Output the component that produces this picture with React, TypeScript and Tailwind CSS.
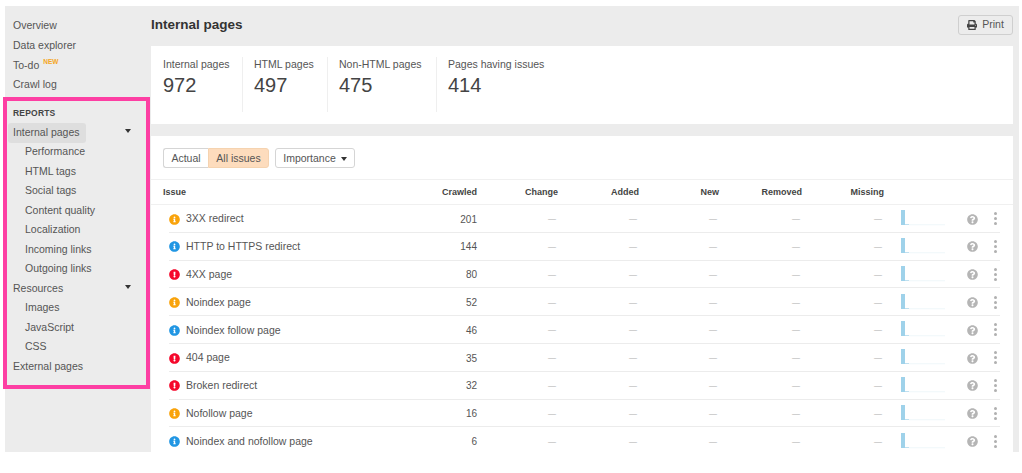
import React from 'react';
import { FaInfoCircle, FaExclamationCircle, FaQuestionCircle, FaPrint } from 'react-icons/fa';

type Level = 'warning' | 'notice' | 'error';

interface IssueRow {
  name: string;
  crawled: number;
  level: Level;
}

const issues: IssueRow[] = [
  { name: '3XX redirect', crawled: 201, level: 'warning' },
  { name: 'HTTP to HTTPS redirect', crawled: 144, level: 'notice' },
  { name: '4XX page', crawled: 80, level: 'error' },
  { name: 'Noindex page', crawled: 52, level: 'warning' },
  { name: 'Noindex follow page', crawled: 46, level: 'notice' },
  { name: '404 page', crawled: 35, level: 'error' },
  { name: 'Broken redirect', crawled: 32, level: 'error' },
  { name: 'Nofollow page', crawled: 16, level: 'warning' },
  { name: 'Noindex and nofollow page', crawled: 6, level: 'notice' },
];

const stats = [
  { label: 'Internal pages', value: 972, width: 'w-[80px]' },
  { label: 'HTML pages', value: 497, width: 'w-[85px]' },
  { label: 'Non-HTML pages', value: 475, width: 'w-[109px]' },
  { label: 'Pages having issues', value: 414, width: 'w-[120px]' },
];

const Arrow = () => (
  <svg viewBox="0 0 6 4" className="w-[6px] h-[4px] fill-[#333]">
    <path d="M0 0h6L3 4z" />
  </svg>
);

const NavItem = ({ label, sub }: { label: string; sub?: boolean }) => (
  <div className={`h-[19.5px] flex items-center ${sub ? 'pl-[20px]' : 'pl-[8px]'}`}>{label}</div>
);

const NavGroup = ({ label, active }: { label: string; active?: boolean }) => (
  <div className="h-[19.5px] flex items-center justify-between pr-[15px]">
    <span className={`h-[20px] flex items-center pl-[5px] pr-[6px] ml-[3px] rounded-[3px] ${active ? 'bg-[#dedede]' : ''}`}>
      {label}
    </span>
    <span className="-mt-[3px] -translate-x-[5px]">
      <Arrow />
    </span>
  </div>
);

const Sidebar = () => (
  <aside className="w-[146px] shrink-0 pt-[10.5px] text-[10.5px] text-[#555]">
    <NavItem label="Overview" />
    <NavItem label="Data explorer" />
    <div className="h-[19.5px] flex items-start pl-[8px] pt-[2px]">
      <span>To-do</span>
      <span className="ml-[4px] -mt-[1px] text-[6.5px] font-bold text-[#f5a623]">NEW</span>
    </div>
    <NavItem label="Crawl log" />
    <div className="h-[19.5px] mt-[9px] flex items-center pl-[8px] text-[8.5px] font-bold tracking-[0.2px] text-[#444]">
      REPORTS
    </div>
    <NavGroup label="Internal pages" active />
    <NavItem sub label="Performance" />
    <NavItem sub label="HTML tags" />
    <NavItem sub label="Social tags" />
    <NavItem sub label="Content quality" />
    <NavItem sub label="Localization" />
    <NavItem sub label="Incoming links" />
    <NavItem sub label="Outgoing links" />
    <NavGroup label="Resources" />
    <NavItem sub label="Images" />
    <NavItem sub label="JavaScript" />
    <NavItem sub label="CSS" />
    <NavItem label="External pages" />
  </aside>
);

const LevelIcon = ({ level }: { level: Level }) => {
  if (level === 'error') return <FaExclamationCircle className="w-[11px] h-[11px] text-[#f5072b]" />;
  if (level === 'warning') return <FaInfoCircle className="w-[11px] h-[11px] text-[#f9a30b]" />;
  return <FaInfoCircle className="w-[11px] h-[11px] text-[#2196e3]" />;
};

const Dash = () => <div className="text-right pr-[2px] text-[8px] text-[#aaa]">—</div>;

const Sparkline = () => (
  <svg viewBox="0 0 44 16" className="w-[44px] h-[16px]">
    <rect x="0" y="0" width="4" height="15" fill="#9fd2ea" />
    <rect x="4" y="14" width="4" height="1" fill="#bfe0f0" />
    <rect x="8" y="14.5" width="36" height="0.7" fill="#e8f3f8" />
  </svg>
);

const Dots = () => (
  <div className="flex flex-col gap-[2px]">
    <span className="w-[3px] h-[3px] rounded-full bg-[#b0b0b0]" />
    <span className="w-[3px] h-[3px] rounded-full bg-[#b0b0b0]" />
    <span className="w-[3px] h-[3px] rounded-full bg-[#b0b0b0]" />
  </div>
);

const Row = ({ row }: { row: IssueRow }) => (
  <div className="h-[27.8px] pt-[1.6px] ml-[18px] mr-[13px] border-b border-[#ececec] flex items-center text-[10px] text-[#555]">
    <div className="grid grid-cols-[252px_56px_81px_81px_80px_83px_82px] items-center">
      <div className="flex items-center gap-[6px] text-[10.5px]">
        <LevelIcon level={row.level} />
        <span>{row.name}</span>
      </div>
      <div className="text-right">{row.crawled}</div>
      <Dash />
      <Dash />
      <Dash />
      <Dash />
      <Dash />
    </div>
    <div className="ml-[17px] -mt-[2px] flex items-center">
      <Sparkline />
    </div>
    <FaQuestionCircle className="ml-[22px] w-[11px] h-[11px] text-[#b5b5b5]" />
    <div className="ml-[16px] -mt-[1px]">
      <Dots />
    </div>
  </div>
);

const IssuesCard = () => (
  <section className="mt-[12px] flex-1 bg-white">
    <div className="h-[44px] pt-[1px] px-[12px] flex items-center gap-[6px] border-b border-[#f0f0f0] text-[10.5px] text-[#555]">
      <div className="flex h-[20px]">
        <div className="w-[45px] pt-[1px] flex items-center justify-center border border-[#d5d5d5] border-r-0 rounded-l-[3px]">Actual</div>
        <div className="w-[61px] pt-[1px] flex items-center justify-center bg-[#fddcbd] border border-[#f5d3b0] rounded-r-[3px]">All issues</div>
      </div>
      <div className="w-[80px] h-[20px] pt-[1px] flex items-center justify-center gap-[5px] border border-[#d5d5d5] rounded-[3px]">
        Importance
        <Arrow />
      </div>
    </div>
    <div className="h-[25px] pt-[1px] pl-[12px] border-b border-[#f0f0f0] grid grid-cols-[258px_56px_81px_81px_80px_83px_82px] items-center text-[9px] font-bold text-[#444]">
      <div>Issue</div>
      <div className="text-right">Crawled</div>
      <div className="text-right">Change</div>
      <div className="text-right">Added</div>
      <div className="text-right">New</div>
      <div className="text-right">Removed</div>
      <div className="text-right">Missing</div>
    </div>
    {issues.map((row) => (
      <Row key={row.name} row={row} />
    ))}
  </section>
);

export default function App() {
  return (
    <div className="relative w-[1022px] h-[473px] bg-white overflow-hidden pl-[5px] pt-[6px] font-['Liberation_Sans',Arial,sans-serif]">
      <div className="w-[1014px] h-[446px] bg-[#ececec] flex overflow-hidden">
        <Sidebar />
        <main className="w-[862px] flex flex-col">
          <header className="h-[40px] shrink-0 pb-[1px] flex items-center justify-between">
            <h1 className="text-[13.5px] font-bold text-[#333]">Internal pages</h1>
            <button className="w-[55px] h-[20px] -mt-[1px] flex items-center justify-center gap-[5px] border border-[#cfcfcf] rounded-[3px] text-[10.5px] text-[#555]">
              <FaPrint className="w-[10px] h-[10px] text-[#444]" />
              Print
            </button>
          </header>
          <section className="h-[78px] shrink-0 bg-white pl-[12px] pt-[11px] flex items-start">
            {stats.map((s, i) => (
              <div
                key={s.label}
                className={`${s.width} h-[55px] ${i < 3 ? 'border-r border-[#efefef]' : ''} ${i > 0 ? 'pl-[11px]' : ''}`}
              >
                <div className="text-[10.5px] leading-[14px] text-[#555]">{s.label}</div>
                <div className="mt-[2px] text-[20px] leading-[24px] text-[#444]">{s.value}</div>
              </div>
            ))}
          </section>
          <IssuesCard />
        </main>
      </div>
      <div className="absolute left-[3px] top-[97px] w-[147px] h-[292px] border-4 border-[#fd3fa3]" />
    </div>
  );
}
